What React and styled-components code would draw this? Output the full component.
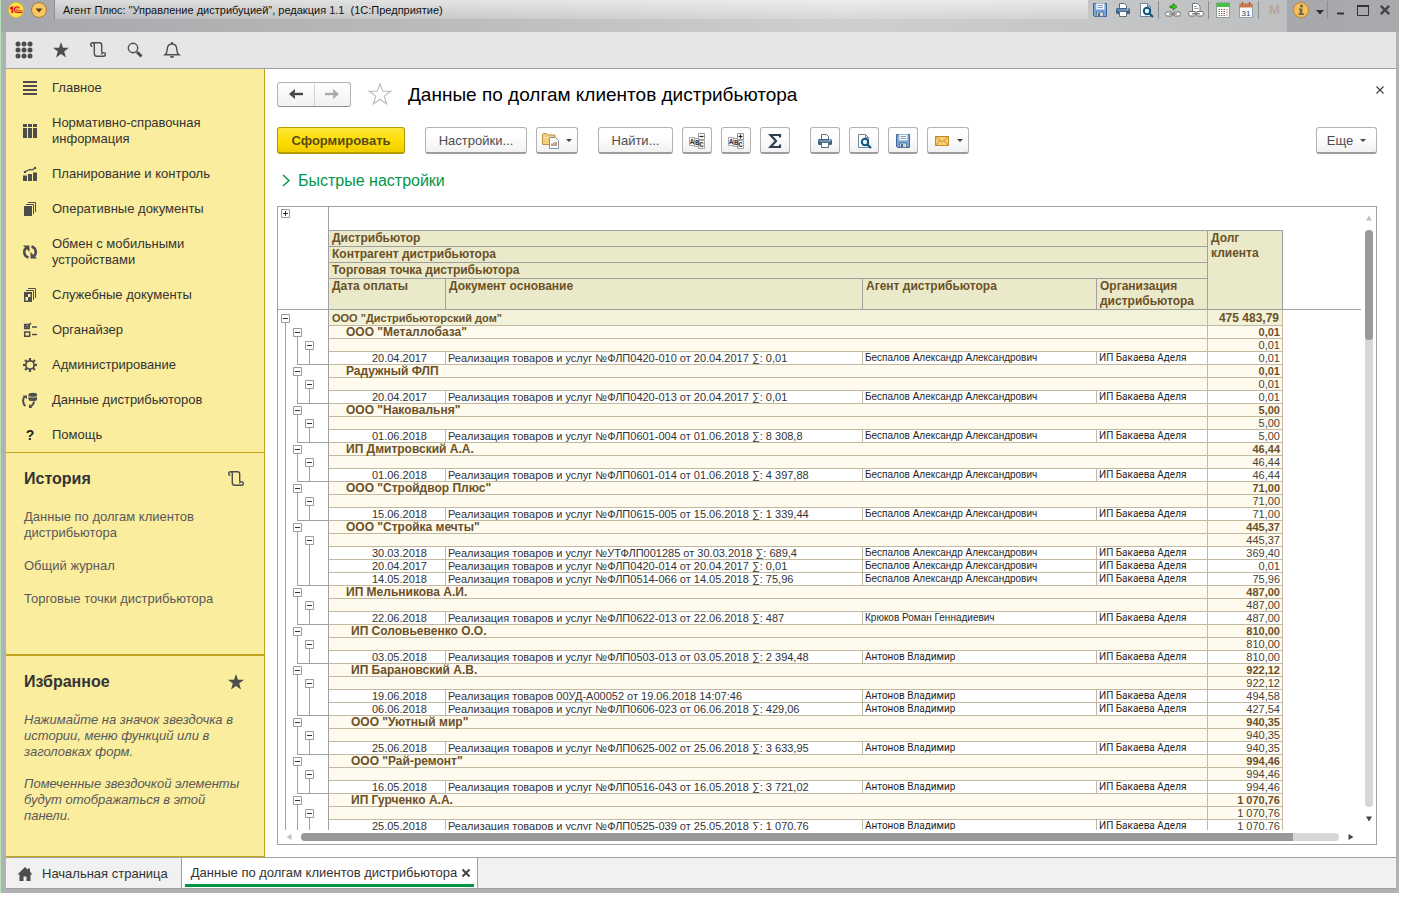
import React from 'react';
import styled, { createGlobalStyle } from 'styled-components';

const line = '#a0a0a0';
const gold = '#bfa61c';
const tan = '#c3b9a0';
const ink = '#4d4d4d';

const GlobalStyle = createGlobalStyle`
  * {
    box-sizing: border-box;
  }
  body {
    margin: 0;
    background: #ffffff;
    color: #333333;
    font-family: 'Liberation Sans', Arial, sans-serif;
    font-size: 13px;
    line-height: 16px;
  }
  button {
    font: inherit;
    color: inherit;
    padding: 0;
    margin: 0;
    border: 0;
    background: none;
  }
`;

/* ---------- Window ---------- */

const Window = styled.div`
  display: flex;
  flex-direction: column;
  height: calc(100vh - 5px);
  margin-right: 7px;
  border-left: 1px solid #b4e4b4;
  overflow: hidden;
`;

const TitleBar = styled.header`
  display: flex;
  align-items: flex-start;
  height: 32px;
  flex-shrink: 0;
  padding: 0 3px 0 6px;
  background: linear-gradient(90deg, #a6a7aa 0%, #b9babb 30%, #cfcfcf 60%, #bebfc0 92%, #a7a8ab 92%, #a9aaad 100%);
`;

const AppButtons = styled.div`
  display: flex;
  align-items: center;
  gap: 6px;
  height: 20px;
  padding-right: 7px;
  border-right: 1px solid #8e8f92;
`;

const WindowTitle = styled.div`
  flex: 1;
  height: 19px;
  padding-left: 8px;
  line-height: 20px;
  font-size: 11px;
  color: #111111;
  background: linear-gradient(rgba(255, 255, 255, 0.6), rgba(255, 255, 255, 0.2));
`;

const TitleTools = styled.div`
  display: flex;
  align-items: center;
  height: 20px;
`;

const TitleButton = styled.button`
  display: flex;
  align-items: center;
  justify-content: center;
  width: ${({ $width }) => $width || 23}px;
  height: 20px;
  color: ${({ $muted }) => ($muted ? '#b5a59c' : '#333333')};
  font-size: 13px;
  font-weight: bold;
`;

const TitleDivider = styled.span`
  width: 1px;
  height: 18px;
  margin: 0 2px 0 1px;
  background: #8b8c8f;
`;

const Frame = styled.div`
  flex: 1;
  min-height: 0;
  display: flex;
  flex-direction: column;
  border: solid #b1b2b4;
  border-width: 0 3px 4px 5px;
`;

const QuickBar = styled.nav`
  display: flex;
  align-items: center;
  gap: 13px;
  height: 37px;
  flex-shrink: 0;
  padding: 0 6px;
  background: #e6e6e6;
  border-bottom: 1px solid ${line};
`;

const IconButton = styled.button`
  display: flex;
  align-items: center;
  justify-content: center;
  width: 24px;
  height: 24px;
  color: ${ink};
`;

const Body = styled.div`
  flex: 1;
  min-height: 0;
  display: flex;
`;

/* ---------- Sidebar ---------- */

const Sidebar = styled.aside`
  display: flex;
  flex-direction: column;
  width: 259px;
  flex-shrink: 0;
  background: #fbed9e;
  border-right: 1px solid ${gold};
  border-bottom: 1px solid ${gold};
`;

const Menu = styled.nav`
  display: flex;
  flex-direction: column;
  padding-top: 1px;
`;

const MenuItem = styled.a`
  display: flex;
  align-items: center;
  gap: 14px;
  padding: 10px 40px 9px 16px;
  color: #333333;
  text-decoration: none;
  svg {
    flex-shrink: 0;
    color: ${ink};
  }
`;

const Panel = styled.section`
  flex: 1;
  padding: 17px 18px 0;
  border-top: ${({ $rule }) => $rule}px solid ${gold};
`;

const PanelHead = styled.div`
  display: flex;
  align-items: center;
  justify-content: space-between;
  height: 18px;
  margin-bottom: 21px;
  padding-right: 1px;
  svg {
    color: ${ink};
  }
`;

const PanelTitle = styled.h2`
  margin: 0;
  font-size: 16px;
  line-height: 18px;
`;

const HistoryLink = styled.a`
  display: block;
  margin-bottom: 17px;
  padding-right: 30px;
  color: #595959;
  text-decoration: none;
`;

const Hint = styled.p`
  margin: 0 0 16px;
  color: #595959;
  font-style: italic;
`;

/* ---------- Form ---------- */

const Main = styled.main`
  flex: 1;
  min-width: 0;
  display: flex;
  flex-direction: column;
  padding: 12px 19px 12px 12px;
  background: #ffffff;
`;

const FormHead = styled.div`
  display: flex;
  align-items: center;
  height: 26px;
  margin-right: -8px;
`;

const NavButtons = styled.div`
  display: flex;
  width: 74px;
  height: 25px;
  border: 1px solid #b3b3b3;
  border-bottom-color: #8f8f8f;
  border-radius: 3px;
  background: linear-gradient(#ffffff, #f1f1f1);
`;

const NavButton = styled.button`
  flex: 1;
  display: flex;
  align-items: center;
  justify-content: center;
  color: ${({ disabled }) => (disabled ? '#aaaaaa' : '#444444')};
  & + & {
    border-left: 1px solid #d4d4d4;
  }
`;

const FavoriteButton = styled(IconButton)`
  margin: 0 16px 0 17px;
`;

const FormTitle = styled.h1`
  flex: 1;
  margin: 0;
  padding-top: 2px;
  color: #000000;
  font-size: 19px;
  font-weight: normal;
  line-height: 24px;
`;

const CloseButton = styled.button`
  display: flex;
  width: 10px;
  height: 10px;
  margin-bottom: 8px;
`;

const Toolbar = styled.div`
  display: flex;
  align-items: center;
  gap: 20px;
  margin-top: 20px;
`;

const ToolGroup = styled.div`
  display: flex;
  gap: 9px;
  &:last-child {
    margin-left: auto;
  }
`;

const ToolButton = styled.button`
  display: flex;
  align-items: center;
  justify-content: center;
  gap: 7px;
  width: ${({ $width }) => $width || 30}px;
  height: 27px;
  padding-top: 1px;
  border: 1px solid #b3b3b3;
  border-bottom: 2px solid #9c9c9c;
  border-radius: 3px;
  background: linear-gradient(#ffffff 30%, #f1f1f1);
  color: #4d4d4d;
`;

const PrimaryButton = styled(ToolButton)`
  border-color: #b39b00;
  background: linear-gradient(#ffe838, #fcdc00 60%, #f0cd00);
  color: #5a4a1a;
  font-weight: bold;
`;

const Caret = styled.span`
  border: 3px solid transparent;
  border-top-color: #444444;
  border-bottom-width: 0;
`;

const QuickSettings = styled.button`
  display: flex;
  align-items: center;
  align-self: flex-start;
  gap: 8px;
  margin: 16px 0 15px 5px;
  color: #009646;
  font-size: 16px;
  line-height: 21px;
`;

/* ---------- Report ---------- */

const Report = styled.div`
  flex: 1;
  min-height: 0;
  display: grid;
  grid-template-columns: minmax(0, 1fr) 15px;
  grid-template-rows: minmax(0, 1fr) 14px;
  border: 1px solid ${line};
`;

const Viewport = styled.div`
  overflow: hidden;
`;

const Table = styled.table`
  width: 100%;
  table-layout: fixed;
  border-collapse: separate;
  border-spacing: 0;
  font-size: 11px;
  line-height: 12px;
  td,
  th {
    padding: 0;
    text-align: left;
    white-space: nowrap;
  }
`;

const HeadCell = styled.th`
  && {
    padding: ${({ $flat }) => ($flat ? 0 : '0 3px')};
    white-space: normal;
  }
  height: ${({ $height }) => $height}px;
  border-right: ${({ $flat }) => ($flat ? 0 : 1)}px solid ${line};
  border-bottom: 1px solid ${line};
  background: ${({ $flat }) => ($flat ? '#ffffff' : '#eaeacb')};
  color: #6b5028;
  font-size: 12px;
  line-height: 15px;
  vertical-align: top;
`;

const FillerHead = styled.td`
  border-bottom: 1px solid ${line};
`;

const TreeHead = styled.td`
  border-right: 1px solid ${line};
  border-bottom: 1px solid ${line};
  vertical-align: top;
`;

const TreeCell = styled.td`
  border-right: 1px solid ${line};
`;

const TreeRow = styled.div`
  display: flex;
  height: ${({ $height }) => $height || 13}px;
  padding-left: 3px;
`;

const Level = styled.span`
  display: flex;
  align-items: center;
  flex: ${({ $rest }) => ($rest ? '1' : '0 0 12px')};
  border-bottom: ${({ $end }) => ($end ? 1 : 0)}px solid ${line};
  background: ${({ $stem }) => {
    if ($stem === 'full') return `linear-gradient(${line}, ${line}) 4px 0 / 1px 100% no-repeat`;
    if ($stem === 'start') return `linear-gradient(${line}, ${line}) 4px 100% / 1px 50% no-repeat`;
    return 'none';
  }};
`;

/* Closing branch line starts at the stem, not at the edge of the level */
const BranchEnd = styled(Level)`
  flex-basis: 8px;
  margin-left: 4px;
  background-position: 0 0;
`;

const Toggle = styled.button`
  display: flex;
  width: 9px;
  height: 9px;
  background: #ffffff;
`;

const TotalCell = styled.td`
  && {
    padding: 0 3px;
    text-align: ${({ $right }) => ($right ? 'right' : 'left')};
  }
  height: 16px;
  border-right: 1px solid ${tan};
  border-bottom: 1px solid ${tan};
  background: #f2f2d9;
  color: #6b5028;
  font-size: ${({ $right }) => ($right ? 12 : 11)}px;
  font-weight: bold;
`;

const GroupCell = styled.td`
  && {
    padding-left: ${({ $indent }) => $indent || 0}px;
  }
  height: 13px;
  border-right: 1px solid ${tan};
  border-bottom: 1px solid ${tan};
  background: #fffaee;
  color: #6b5028;
  font-size: 12px;
  font-weight: bold;
`;

const DocCell = styled.td`
  && {
    padding: 0 2px;
    ${({ $date }) => $date && 'padding-right: 18px; text-align: right;'}
  }
  height: 13px;
  border-right: 1px solid ${tan};
  border-bottom: 1px solid ${tan};
  color: #333333;
`;

const NameCell = styled(DocCell)`
  color: #1f1f1f;
  font-family: ${({ $narrow }) => ($narrow ? "Roboto, 'Liberation Sans', sans-serif" : 'inherit')};
  font-size: 10px;
`;

const SumCell = styled(GroupCell)`
  && {
    padding-right: 2px;
    text-align: right;
  }
  background: ${({ $plain }) => ($plain ? '#ffffff' : '#fffaee')};
  color: ${({ $bold }) => ($bold ? '#6b5028' : '#4a4235')};
  font-size: 11px;
  font-weight: ${({ $bold }) => ($bold ? 'bold' : 'normal')};
`;

const ScrollColumn = styled.div`
  display: flex;
  flex-direction: column;
  align-items: center;
  justify-content: space-between;
  padding: 8px 0 8px;
`;

const ScrollRow = styled.div`
  display: flex;
  align-items: center;
  justify-content: space-between;
  padding: 0 7px 0 8px;
`;

const VTrack = styled.div`
  flex: 1;
  width: 8px;
  margin: 9px 0;
  border-radius: 4px;
  background: #d6d6d6;
`;

const VThumb = styled.div`
  width: 8px;
  height: 19%;
  border-radius: 4px;
  background: #999999;
`;

const HTrack = styled.div`
  flex: 1;
  height: 8px;
  margin: 0 9px;
  border-radius: 4px;
  background: #d6d6d6;
`;

const HThumb = styled.div`
  width: 95.6%;
  height: 8px;
  border-radius: 4px 0 0 4px;
  background: #999999;
`;

const ScrollButton = styled.button`
  display: flex;
  color: ${({ disabled }) => (disabled ? '#c0c0c0' : '#444444')};
`;

/* ---------- Open windows ---------- */

const TabBar = styled.nav`
  display: flex;
  height: 32px;
  flex-shrink: 0;
  background: #f1f1f1;
  border-top: 1px solid ${line};
  border-bottom: 1px solid ${line};
`;

const Tab = styled.div`
  display: flex;
  align-items: center;
  gap: 4px;
  padding: ${({ $active }) => ($active ? '4px 3px 0 6px' : '2px 13px 0 11px')};
  margin-right: ${({ $active }) => ($active ? 3 : 0)}px;
  border-bottom: ${({ $active }) => ($active ? 3 : 0)}px solid #009646;
`;

const TabSlot = styled.div`
  display: flex;
  padding: ${({ $active }) => ($active ? '0 0 1px 3px' : 0)};
  background: ${({ $active }) => ($active ? '#ffffff' : 'transparent')};
  border-right: 1px solid ${line};
`;

const TabLink = styled.a`
  display: flex;
  align-items: center;
  gap: 9px;
  color: #333333;
  text-decoration: none;
`;

const TabClose = styled.button`
  display: flex;
`;

/* ---------- Icons ---------- */

const Svg = ({ size = 16, w, h, children, ...rest }) => (
  <svg width={w || size} height={h || size} viewBox={`0 0 ${w || size} ${h || size}`} fill='none' aria-hidden='true' {...rest}>
    {children}
  </svg>
);

const LogoIcon = () => (
  <Svg>
    <circle cx='8' cy='8' r='7.6' fill='#ffe24a' stroke='#e0b91c' strokeWidth='.8' />
    <path d='M2 6.800 4.300 5.300V11' stroke='#d4151c' strokeWidth='1.800' />
    <path d='M11.500 6.500A2.700 2.700 0 1 0 9.300 10.400H14.500' stroke='#d4151c' strokeWidth='1.300' />
    <path d='M9.900 7.600a.9.900 0 1 0-.6 1.100h5.200' stroke='#d4151c' strokeWidth='.8' />
  </Svg>
);

const DropIcon = () => (
  <Svg>
    <circle cx='8' cy='8' r='7.5' fill='#fbc765' stroke='#a27a3a' />
    <path d='M4.500 6.500h7L8 10.500z' fill='#5a3c14' />
  </Svg>
);

const FloppyIcon = () => (
  <Svg>
    <path d='M1.500 1.500h13v13h-12l-1-1z' fill='#76a3d8' stroke='#3f6694' />
    <path d='M4 1.500h8.500v6H4z' fill='#f4f8fd' stroke='#a9c4e4' strokeWidth='.6' />
    <path d='M5.500 3.500h5.500M5.500 5.500h5.500' stroke='#8aa0b8' />
    <path d='M4.500 10h7v4.500h-7z' fill='#cfd6dd' stroke='#3f6694' strokeWidth='.7' />
    <path d='M6 11h2v3H6z' fill='#5a6978' />
  </Svg>
);

const PrinterIcon = () => (
  <Svg>
    <path d='M4.500 6V1.500h5l2 2V6' fill='#ffffff' stroke='#5c6c7c' />
    <rect x='1' y='6' width='14' height='6' rx='1.5' fill='#3d6488' />
    <path d='M2.500 8h11' stroke='#9fc0dc' />
    <path d='M4.500 9.500h7v5h-7z' fill='#ffffff' stroke='#5c6c7c' />
    <path d='M12 7h1.500' stroke='#ffffff' />
  </Svg>
);

const PreviewIcon = () => (
  <Svg>
    <path d='M2.500 1.500h7l3 3v10h-10z' fill='#ffffff' stroke='#74869a' />
    <path d='M9.500 1.500v3h3' stroke='#74869a' />
    <circle cx='9' cy='9' r='3.200' fill='#e3f3fb' stroke='#0f5680' strokeWidth='2' />
    <path d='m11.300 11.500 3.700 3.500' stroke='#0f5680' strokeWidth='2.400' />
  </Svg>
);

const LinkArrowIcon = () => (
  <Svg>
    <path d='M5 4h3V1.500L12 4.700 8 8V5.700H5z' fill='#3fd21c' stroke='#146f0c' strokeWidth='.8' />
    <rect x='.7' y='10' width='6.600' height='4' rx='1.300' fill='#ffffff' stroke='#707070' />
    <rect x='8.700' y='10' width='6.600' height='4' rx='1.300' fill='#ffffff' stroke='#707070' />
    <path d='M4 12h8' stroke='#707070' strokeWidth='1.200' />
  </Svg>
);

const LinkPageIcon = () => (
  <Svg>
    <path d='M4.500 9V1.500h5l2.500 2.500v5' fill='#ffffff' stroke='#707880' />
    <path d='M6 4.500h3M6 6.500h4.500' stroke='#9aa4ae' />
    <rect x='.7' y='9.500' width='6.600' height='4.500' rx='1.300' fill='#ffffff' stroke='#707070' />
    <rect x='8.700' y='9.500' width='6.600' height='4.500' rx='1.300' fill='#ffffff' stroke='#707070' />
    <path d='M4 11.800h8' stroke='#707070' strokeWidth='1.200' />
  </Svg>
);

const CalcIcon = () => (
  <Svg>
    <path d='M1.500 1h13v14.500h-13z' fill='#ffffff' stroke='#7a8a80' strokeWidth='.8' />
    <path d='M1.500 1h13v4h-13z' fill='#4cc04a' />
    <path d='M3.500 7.500h7M3.500 9.500h7M3.500 11.500h7M3.500 13.500h7' stroke='#6b6b6b' strokeDasharray='1.500 1' />
    <path d='M12 7v7' stroke='#d05a4a' strokeDasharray='1.500 1' />
  </Svg>
);

const CalendarIcon = () => (
  <Svg>
    <path d='M1.500 3h13v12.500h-13z' fill='#f7fafd' stroke='#7d92a8' strokeWidth='.8' />
    <path d='M1.500 1.500h13v4h-13z' fill='#c87a4a' />
    <path d='M4.500 0v2.500M11.500 0v2.500' stroke='#8a4a24' />
    <text x='8' y='13.500' textAnchor='middle' fontSize='8' fontWeight='normal' fill='#33475c'>31</text>
  </Svg>
);

const InfoIcon = () => (
  <Svg>
    <circle cx='8' cy='8' r='7.500' fill='#f8bf55' stroke='#b98a35' />
    <circle cx='8.500' cy='4' r='1.500' fill='#6a6454' />
    <path d='M6 6.500h3.300v5H11V13H5.500v-1.500h1.300V8H6z' fill='#6a6454' />
  </Svg>
);

const CaretIcon = () => (
  <Svg w={8} h={9}>
    <path d='M0 4h8L4 8.500z' fill='#333333' />
  </Svg>
);

const MinIcon = () => (
  <Svg w={10} h={12}>
    <path d='M1 9.500h7' stroke='#333333' strokeWidth='2' />
  </Svg>
);

const MaxIcon = () => (
  <Svg w={12} h={11}>
    <path d='M.5.500h11v10H.5z' stroke='#333333' />
    <path d='M0 1h12' stroke='#333333' strokeWidth='2' />
  </Svg>
);

const CrossIcon = ({ size = 10, width = 1.2 }) => (
  <Svg size={size} viewBox='0 0 10 10'>
    <path d='m1.500 1.500 7 7M8.500 1.500l-7 7' stroke='#444444' strokeWidth={width} />
  </Svg>
);

const GridIcon = () => (
  <Svg size={18}>
    {[3, 9, 15].map((y) => [3, 9, 15].map((x) => <circle key={`${x}${y}`} cx={x} cy={y} r='2.500' fill='currentColor' />))}
  </Svg>
);

const StarIcon = () => (
  <Svg size={18}>
    <path d='m9 1 2 5.800h6l-4.800 3.700L14 16.500 9 12.900l-5 3.600 1.800-6L1 6.800h6z' fill='currentColor' />
  </Svg>
);

const HistoryIcon = () => (
  <Svg size={18}>
    <path
      d='M3.500 5.400a1.800 1.800 0 1 1 1.800-1.800V12.500c0 1.800.9 2.700 2.300 2.700h7.200M3.500 1.800h7c1.500 0 2.200.9 2.200 2.200v7.600M12.700 13.400a1.800 1.800 0 1 1 1.800 1.800'
      stroke='currentColor'
      strokeWidth='1.400'
    />
  </Svg>
);

const SearchIcon = () => (
  <Svg size={18}>
    <circle cx='7' cy='7' r='4.700' stroke='currentColor' strokeWidth='1.400' />
    <path d='m11 11 4.500 4.500' stroke='currentColor' strokeWidth='3' />
  </Svg>
);

const BellIcon = () => (
  <Svg size={18}>
    <path d='M2 13.800c2-1.500 2.300-3 2.300-5.500C4.300 4.800 6 3 9 3s4.700 1.800 4.700 5.300c0 2.500.3 4 2.300 5.500z' stroke='currentColor' strokeWidth='1.400' />
    <path d='M9 3V1M7.300 15.800h3.400' stroke='currentColor' strokeWidth='1.800' />
  </Svg>
);

const MenuLinesIcon = () => (
  <Svg>
    <path d='M1 1h14v2H1zM1 5h14v2H1zM1 9h14v2H1zM1 13h14v2H1z' fill='currentColor' />
  </Svg>
);

const CatalogIcon = () => (
  <Svg>
    <path d='M1 1h4v14H1zM6 1h4v14H6zM11 1h4v14h-4z' fill='currentColor' />
    <path d='M1 4.500h14' stroke='#fbed9e' />
  </Svg>
);

const PlanIcon = () => (
  <Svg>
    <path d='M1 9.500h4V15H1zM6 8h4v7H6zM11 6.500h4V15h-4z' fill='currentColor' />
    <path d='M2.500 6 8 3.500l2 .5 4-2.500' stroke='currentColor' strokeWidth='1.200' />
    <circle cx='3' cy='6' r='1.200' fill='currentColor' />
    <circle cx='13' cy='2' r='1.200' fill='currentColor' />
  </Svg>
);

const DocsIcon = ({ checked }) => (
  <Svg>
    <path d='M2 5h8v10H2z' fill='currentColor' />
    <path d='M4 3.500h7.500V13M6 1.500h7.500V11' stroke='currentColor' />
    {checked && <path d='M3.500 10h2.500v3.500H3.500zM6 7h2.500v3H6z' fill='#fbed9e' />}
  </Svg>
);

const SyncIcon = () => (
  <Svg>
    <path d='M6.500 13.500C1.500 12 1 6 4.500 3.500M9.500 2.500c5 1.500 5.500 7.500 2 10' stroke='currentColor' strokeWidth='2.600' />
    <path d='M1 1.500h6.500V8zM15 14.500H8.500V8z' fill='currentColor' />
  </Svg>
);

const OrganizerIcon = () => (
  <Svg>
    <path d='M2.700 2.500h4.500v4H2.700zM2.700 10h5v4.300h-5z' stroke='currentColor' strokeWidth='1.500' />
    <path d='m3 3 2 2.500L9 1M10 5h5M10 12.500h5' stroke='currentColor' strokeWidth='1.600' />
  </Svg>
);

const GearIcon = () => (
  <Svg>
    <circle cx='8' cy='8' r='4.200' stroke='currentColor' strokeWidth='1.800' />
    {[0, 45, 90, 135, 180, 225, 270, 315].map((a) => (
      <path key={a} d='M8 3.500V1' stroke='currentColor' strokeWidth='2.200' transform={`rotate(${a} 8 8)`} />
    ))}
  </Svg>
);

const DistributorIcon = () => (
  <Svg>
    <path d='M6.500 2.500h8.500v5c0 2-8.500 2-8.500 0z' fill='currentColor' />
    <ellipse cx='10.800' cy='2.500' rx='4.300' ry='1.700' fill='currentColor' />
    <path d='M6.500 4.300c2 1.300 6.500 1.300 8.500 0' stroke='#fbed9e' strokeWidth='.8' />
    <path d='M3.500 14C.5 12 .5 7 2.500 4.500M12 9.500c-.3 2.500-1.500 4-3.500 4.500' stroke='currentColor' strokeWidth='2' />
    <path d='M.5 3.500H5V7zM10.500 16H7v-4z' fill='currentColor' />
  </Svg>
);

const HelpIcon = () => (
  <Svg>
    <text x='8' y='13' textAnchor='middle' fontSize='14' fontWeight='bold' fill='#222222'>?</text>
  </Svg>
);

const ArrowIcon = ({ flip }) => (
  <Svg>
    <g transform={flip ? 'matrix(-1 0 0 1 16 0)' : undefined}>
      <path d='M5 8h10' stroke='currentColor' strokeWidth='2.400' />
      <path d='M1 8l6-5v3l-2 2 2 2v3z' fill='currentColor' />
    </g>
  </Svg>
);

const StarOutlineIcon = () => (
  <Svg size={24}>
    <path d='m12 1.800 2.700 7.500h8l-6.400 4.800 2.300 7.900-6.600-4.700L5.400 22l2.300-7.900-6.400-4.800h8z' stroke='#b5bcc2' strokeWidth='1.100' />
  </Svg>
);

const FolderReportIcon = () => (
  <Svg size={17}>
    <path d='M.5 3c0-1 .5-1.500 1.500-1.500h2.500l1 1.500H13v9.500H.5z' fill='#f5cf7c' stroke='#b9923f' />
    <path d='M1 5.500h12' stroke='#fdeab8' />
    <path d='M7.500 5.500h6l3 3v8h-9z' fill='#ffffff' stroke='#7f93a8' />
    <path d='M10 14v-2.500M14 14v-4' stroke='#d43a3a' strokeWidth='1.200' />
    <path d='M12 14v-3.500' stroke='#3fa03f' strokeWidth='1.200' />
  </Svg>
);

const AbcIcon = ({ expand }) => (
  <Svg>
    <path d='M.5 4.500h5v8h-5zM5.500 5.500h5v8h-5zM9.500 7.500h6v8h-6z' fill='#f6f6f6' stroke='#a8a8a8' />
    <path d='M9.500.500h6v6h-6z' fill='#ffffff' stroke='#9a9a9a' />
    <path d={expand ? 'M10.500 3.500h4M12.500 1.500v4' : 'M10.500 3.500h4'} stroke='#222222' strokeWidth='1.200' />
    <g fontSize='7' fontWeight='bold' fill='#333333' fontFamily='Liberation Mono'>
      <text x='1' y='11'>A</text>
      <text x='6' y='12'>B</text>
      <text x='10.500' y='14'>C</text>
    </g>
  </Svg>
);

const SigmaIcon = () => (
  <Svg>
    <path d='M13 4.500V2H3.500L9 8l-5.500 6H13v-2.500' stroke='#2f3f52' strokeWidth='2.200' />
  </Svg>
);

const MailIcon = () => (
  <Svg>
    <path d='M1.500 3.500h13v9h-13z' fill='#f9cf6e' stroke='#c08a2c' />
    <path d='M1.500 3.500 8 9l6.500-5.500M1.500 12.500 6 7.500M14.500 12.500 10 7.500' stroke='#c08a2c' strokeWidth='.9' />
  </Svg>
);

const ChevronIcon = () => (
  <Svg w={8} h={13}>
    <path d='m1 1 6 5.500L1 12' stroke='#009646' strokeWidth='1.500' />
  </Svg>
);

const HomeIcon = () => (
  <Svg>
    <path d='M8 1 .5 8.500h2V15h4v-4.500h3V15h4V8.500h2l-2.500-2.700V2.500h-2v1.300z' fill={ink} />
  </Svg>
);

const TriangleIcon = ({ angle }) => (
  <Svg size={6}>
    <path d='M0 5.500h6L3 .5z' fill='currentColor' transform={`rotate(${angle} 3 3)`} />
  </Svg>
);

const BoxIcon = ({ plus }) => (
  <Svg size={9}>
    <path d='M.5.500h8v8h-8z' fill='#ffffff' stroke='#9c9c9c' />
    <path d={plus ? 'M2 4.500h5M4.500 2v5' : 'M2 4.500h5'} stroke='#333333' />
  </Svg>
);

/* ---------- Data ---------- */

const menu = [
  { label: 'Главное', icon: <MenuLinesIcon /> },
  { label: 'Нормативно-справочная информация', icon: <CatalogIcon /> },
  { label: 'Планирование и контроль', icon: <PlanIcon /> },
  { label: 'Оперативные документы', icon: <DocsIcon /> },
  { label: 'Обмен с мобильными устройствами', icon: <SyncIcon /> },
  { label: 'Служебные документы', icon: <DocsIcon checked /> },
  { label: 'Органайзер', icon: <OrganizerIcon /> },
  { label: 'Администрирование', icon: <GearIcon /> },
  { label: 'Данные дистрибьюторов', icon: <DistributorIcon /> },
  { label: 'Помощь', icon: <HelpIcon /> },
];

const history = ['Данные по долгам клиентов дистрибьютора', 'Общий журнал', 'Торговые точки дистрибьютора'];

const bespalov = 'Беспалов Александр Александрович';
const antonov = 'Антонов Владимир';
const org = 'ИП Бакаева Аделя';
const sale = 'Реализация товаров и услуг';

const groups = [
  { name: 'ООО "Металлобаза"', sum: '0,01', docs: [['20.04.2017', `${sale} №ФЛП0420-010 от 20.04.2017 ∑: 0,01`, bespalov, '0,01']] },
  { name: 'Радужный ФЛП', sum: '0,01', docs: [['20.04.2017', `${sale} №ФЛП0420-013 от 20.04.2017 ∑: 0,01`, bespalov, '0,01']] },
  { name: 'ООО "Наковальня"', sum: '5,00', docs: [['01.06.2018', `${sale} №ФЛП0601-004 от 01.06.2018 ∑: 8 308,8`, bespalov, '5,00']] },
  { name: 'ИП Дмитровский А.А.', sum: '46,44', docs: [['01.06.2018', `${sale} №ФЛП0601-014 от 01.06.2018 ∑: 4 397,88`, bespalov, '46,44']] },
  { name: 'ООО "Стройдвор Плюс"', sum: '71,00', docs: [['15.06.2018', `${sale} №ФЛП0615-005 от 15.06.2018 ∑: 1 339,44`, bespalov, '71,00']] },
  {
    name: 'ООО "Стройка мечты"',
    sum: '445,37',
    docs: [
      ['30.03.2018', `${sale} №УТФЛП001285 от 30.03.2018 ∑: 689,4`, bespalov, '369,40'],
      ['20.04.2017', `${sale} №ФЛП0420-014 от 20.04.2017 ∑: 0,01`, bespalov, '0,01'],
      ['14.05.2018', `${sale} №ФЛП0514-066 от 14.05.2018 ∑: 75,96`, bespalov, '75,96'],
    ],
  },
  { name: 'ИП Мельникова А.И.', sum: '487,00', docs: [['22.06.2018', `${sale} №ФЛП0622-013 от 22.06.2018 ∑: 487`, 'Крюков Роман Геннадиевич', '487,00']] },
  { name: 'ИП Соловьевенко О.О.', wide: true, sum: '810,00', docs: [['03.05.2018', `${sale} №ФЛП0503-013 от 03.05.2018 ∑: 2 394,48`, antonov, '810,00']] },
  {
    name: 'ИП Барановский А.В.',
    wide: true,
    sum: '922,12',
    docs: [
      ['19.06.2018', 'Реализация товаров 00УД-А00052 от 19.06.2018 14:07:46', antonov, '494,58'],
      ['06.06.2018', `${sale} №ФЛП0606-023 от 06.06.2018 ∑: 429,06`, antonov, '427,54'],
    ],
  },
  { name: 'ООО "Уютный мир"', wide: true, sum: '940,35', docs: [['25.06.2018', `${sale} №ФЛП0625-002 от 25.06.2018 ∑: 3 633,95`, antonov, '940,35']] },
  { name: 'ООО "Рай-ремонт"', wide: true, sum: '994,46', docs: [['16.05.2018', `${sale} №ФЛП0516-043 от 16.05.2018 ∑: 3 721,02`, antonov, '994,46']] },
  { name: 'ИП Гурченко А.А.', wide: true, sum: '1 070,76', docs: [['25.05.2018', `${sale} №ФЛП0525-039 от 25.05.2018 ∑: 1 070,76`, antonov, '1 070,76']] },
];

/* ---------- Parts ---------- */

const Collapse = () => (
  <Toggle aria-label='Свернуть'>
    <BoxIcon />
  </Toggle>
);

function GroupRows({ group }) {
  const last = group.docs.length - 1;
  return (
    <>
      <tr>
        <TreeCell>
          <TreeRow>
            <Level $stem='full' />
            <Level $stem='start'>
              <Collapse />
            </Level>
          </TreeRow>
        </TreeCell>
        <GroupCell colSpan={4} $indent={group.wide ? 22 : 17}>{group.name}</GroupCell>
        <SumCell $bold>{group.sum}</SumCell>
      </tr>
      <tr>
        <TreeCell>
          <TreeRow>
            <Level $stem='full' />
            <Level $stem='full' />
            <Level $stem='start'>
              <Collapse />
            </Level>
          </TreeRow>
        </TreeCell>
        <GroupCell colSpan={4} />
        <SumCell>{group.sum}</SumCell>
      </tr>
      {group.docs.map(([date, title, agent, sum], i) => (
        <tr key={title}>
          <TreeCell>
            <TreeRow>
              <Level $stem='full' />
              <BranchEnd $stem='full' $end={i === last} />
              <Level $stem='full' $end={i === last} />
              <Level $rest $end={i === last} />
            </TreeRow>
          </TreeCell>
          <DocCell $date>{date}</DocCell>
          <DocCell>{title}</DocCell>
          <NameCell $narrow={agent === antonov}>{agent}</NameCell>
          <NameCell $narrow>{org}</NameCell>
          <SumCell $plain>{sum}</SumCell>
        </tr>
      ))}
    </>
  );
}

function ReportTable() {
  return (
    <Table>
      <colgroup>
        <col style={{ width: 51 }} />
        <col style={{ width: 117 }} />
        <col style={{ width: 417 }} />
        <col style={{ width: 234 }} />
        <col style={{ width: 111 }} />
        <col style={{ width: 75 }} />
        <col />
      </colgroup>
      <thead>
        <tr>
          <TreeHead rowSpan={5}>
            <TreeRow>
              <Level>
                <Toggle aria-label='Развернуть'>
                  <BoxIcon plus />
                </Toggle>
              </Level>
            </TreeRow>
          </TreeHead>
          <HeadCell as='td' $flat $height={24} colSpan={5} />
          <td />
        </tr>
        <tr>
          <HeadCell $height={16} colSpan={4}>Дистрибьютор</HeadCell>
          <HeadCell rowSpan={4}>Долг клиента</HeadCell>
          <FillerHead rowSpan={4} />
        </tr>
        <tr>
          <HeadCell $height={16} colSpan={4}>Контрагент дистрибьютора</HeadCell>
        </tr>
        <tr>
          <HeadCell $height={16} colSpan={4}>Торговая точка дистрибьютора</HeadCell>
        </tr>
        <tr>
          <HeadCell $height={31}>Дата оплаты</HeadCell>
          <HeadCell>Документ основание</HeadCell>
          <HeadCell>Агент дистрибьютора</HeadCell>
          <HeadCell>Организация дистрибьютора</HeadCell>
        </tr>
      </thead>
      <tbody>
        <tr>
          <TreeCell>
            <TreeRow $height={16}>
              <Level $stem='start'>
                <Collapse />
              </Level>
            </TreeRow>
          </TreeCell>
          <TotalCell colSpan={4}>ООО "Дистрибьюторский дом"</TotalCell>
          <TotalCell $right>475 483,79</TotalCell>
        </tr>
        {groups.map((group) => (
          <GroupRows key={group.name} group={group} />
        ))}
      </tbody>
    </Table>
  );
}

function AppTitleBar() {
  return (
    <TitleBar>
      <AppButtons>
        <TitleButton $width={18} aria-label='1С:Предприятие'><LogoIcon /></TitleButton>
        <TitleButton $width={16} aria-label='Меню'><DropIcon /></TitleButton>
      </AppButtons>
      <WindowTitle>Агент Плюс: "Управление дистрибуцией", редакция 1.1&nbsp; (1С:Предприятие)</WindowTitle>
      <TitleTools>
        <TitleButton aria-label='Сохранить'><FloppyIcon /></TitleButton>
        <TitleButton aria-label='Печать'><PrinterIcon /></TitleButton>
        <TitleButton aria-label='Просмотр'><PreviewIcon /></TitleButton>
        <TitleDivider />
        <TitleButton aria-label='Получить ссылку'><LinkArrowIcon /></TitleButton>
        <TitleButton aria-label='Перейти по ссылке'><LinkPageIcon /></TitleButton>
        <TitleDivider />
        <TitleButton aria-label='Калькулятор'><CalcIcon /></TitleButton>
        <TitleButton aria-label='Календарь'><CalendarIcon /></TitleButton>
        <TitleDivider />
        <TitleButton $width={27} $muted>M</TitleButton>
        <TitleButton $width={26} aria-label='Информация'><InfoIcon /></TitleButton>
        <TitleButton $width={12} aria-label='Ещё'><CaretIcon /></TitleButton>
        <TitleDivider />
        <TitleButton $width={22} aria-label='Свернуть'><MinIcon /></TitleButton>
        <TitleButton $width={22} aria-label='Развернуть'><MaxIcon /></TitleButton>
        <TitleButton $width={22} aria-label='Закрыть'><CrossIcon size={12} width={2} /></TitleButton>
      </TitleTools>
    </TitleBar>
  );
}

function App() {
  return (
    <Window>
      <GlobalStyle />
      <AppTitleBar />
      <Frame>
        <QuickBar>
          <IconButton aria-label='Разделы'><GridIcon /></IconButton>
          <IconButton aria-label='Избранное'><StarIcon /></IconButton>
          <IconButton aria-label='История'><HistoryIcon /></IconButton>
          <IconButton aria-label='Поиск'><SearchIcon /></IconButton>
          <IconButton aria-label='Оповещения'><BellIcon /></IconButton>
        </QuickBar>
        <Body>
          <Sidebar>
            <Menu>
              {menu.map(({ label, icon }) => (
                <MenuItem key={label} href='#'>
                  {icon}
                  {label}
                </MenuItem>
              ))}
            </Menu>
            <Panel $rule={1}>
              <PanelHead>
                <PanelTitle>История</PanelTitle>
                <HistoryIcon />
              </PanelHead>
              {history.map((label) => (
                <HistoryLink key={label} href='#'>{label}</HistoryLink>
              ))}
            </Panel>
            <Panel $rule={2}>
              <PanelHead>
                <PanelTitle>Избранное</PanelTitle>
                <StarIcon />
              </PanelHead>
              <Hint>Нажимайте на значок звездочка в истории, меню функций или в заголовках форм.</Hint>
              <Hint>Помеченные звездочкой элементы будут отображаться в этой панели.</Hint>
            </Panel>
          </Sidebar>
          <Main>
            <FormHead>
              <NavButtons>
                <NavButton aria-label='Назад'><ArrowIcon /></NavButton>
                <NavButton aria-label='Вперед' disabled><ArrowIcon flip /></NavButton>
              </NavButtons>
              <FavoriteButton aria-label='В избранное'><StarOutlineIcon /></FavoriteButton>
              <FormTitle>Данные по долгам клиентов дистрибьютора</FormTitle>
              <CloseButton aria-label='Закрыть'><CrossIcon /></CloseButton>
            </FormHead>
            <Toolbar>
              <PrimaryButton $width={128}>Сформировать</PrimaryButton>
              <ToolGroup>
                <ToolButton $width={102}>Настройки...</ToolButton>
                <ToolButton $width={42} aria-label='Варианты отчета'><FolderReportIcon /><Caret /></ToolButton>
              </ToolGroup>
              <ToolGroup>
                <ToolButton $width={75}>Найти...</ToolButton>
                <ToolButton aria-label='Свернуть группы'><AbcIcon /></ToolButton>
                <ToolButton aria-label='Развернуть группы'><AbcIcon expand /></ToolButton>
                <ToolButton aria-label='Сумма'><SigmaIcon /></ToolButton>
              </ToolGroup>
              <ToolGroup>
                <ToolButton aria-label='Печать'><PrinterIcon /></ToolButton>
                <ToolButton aria-label='Просмотр'><PreviewIcon /></ToolButton>
                <ToolButton aria-label='Сохранить'><FloppyIcon /></ToolButton>
                <ToolButton $width={42} aria-label='Отправить'><MailIcon /><Caret /></ToolButton>
              </ToolGroup>
              <ToolGroup>
                <ToolButton $width={61}>Еще<Caret /></ToolButton>
              </ToolGroup>
            </Toolbar>
            <QuickSettings>
              <ChevronIcon />
              Быстрые настройки
            </QuickSettings>
            <Report>
              <Viewport>
                <ReportTable />
              </Viewport>
              <ScrollColumn>
                <ScrollButton aria-label='Вверх' disabled><TriangleIcon angle={0} /></ScrollButton>
                <VTrack><VThumb /></VTrack>
                <ScrollButton aria-label='Вниз'><TriangleIcon angle={180} /></ScrollButton>
              </ScrollColumn>
              <ScrollRow>
                <ScrollButton aria-label='Влево' disabled><TriangleIcon angle={270} /></ScrollButton>
                <HTrack><HThumb /></HTrack>
                <ScrollButton aria-label='Вправо'><TriangleIcon angle={90} /></ScrollButton>
              </ScrollRow>
            </Report>
          </Main>
        </Body>
        <TabBar>
          <TabSlot>
            <Tab>
              <TabLink href='#'><HomeIcon />Начальная страница</TabLink>
            </Tab>
          </TabSlot>
          <TabSlot $active>
            <Tab $active>
              <TabLink href='#'>Данные по долгам клиентов дистрибьютора</TabLink>
              <TabClose aria-label='Закрыть вкладку'><CrossIcon width={2} /></TabClose>
            </Tab>
          </TabSlot>
        </TabBar>
      </Frame>
    </Window>
  );
}

export default App;
